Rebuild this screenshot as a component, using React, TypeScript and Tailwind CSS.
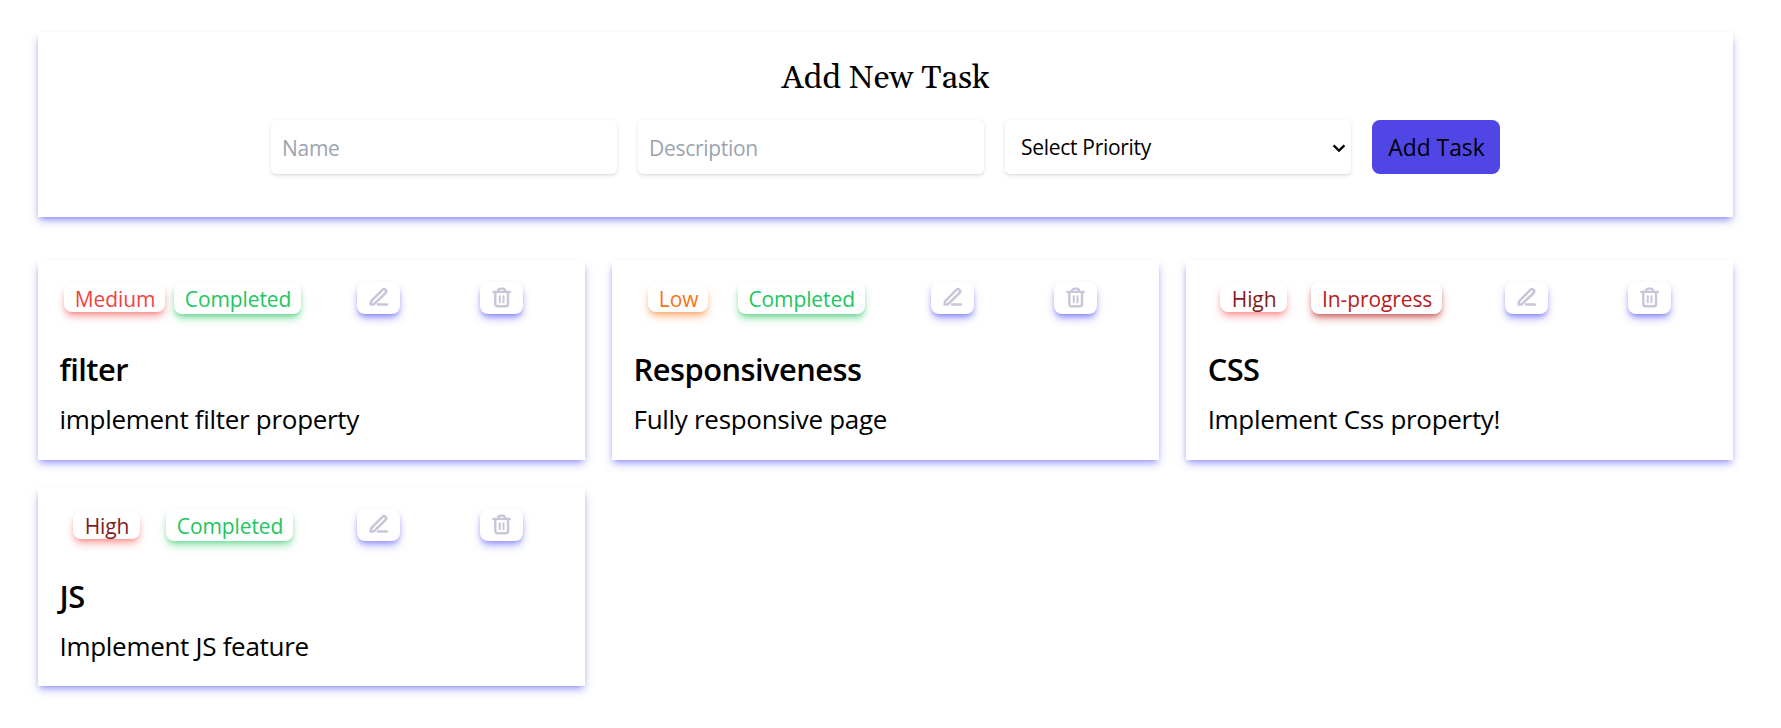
type Priority = "Low" | "Medium" | "High";
type Status = "Completed" | "In-progress";
type Task = { name: string; description: string; priority: Priority; status: Status; offset: string };

const tasks: Task[] = [
  { name: "filter", description: "implement filter property", priority: "Medium", status: "Completed", offset: "pl-[15px]" },
  { name: "Responsiveness", description: "Fully responsive page", priority: "Low", status: "Completed", offset: "pl-[4.6px]" },
  { name: "CSS", description: "Implement Css property!", priority: "High", status: "In-progress", offset: "pl-[6px]" },
  { name: "JS", description: "Implement JS feature", priority: "High", status: "Completed", offset: "pl-[7px]" },
];

const SHADOW =
  "shadow-[0_5.4px_8.2px_-1.4px_var(--glow),0_2.7px_5.4px_-2.7px_var(--glow)]";

const priorityStyle: Record<Priority, string> = {
  Low: "w-[60px] text-[#f97316] [--glow:rgba(249,115,22,0.5)]",
  Medium: "w-[101px] text-[#ef4444] [--glow:rgba(239,68,68,0.5)]",
  High: "w-[67px] text-[#7f1d1d] [--glow:rgba(248,80,80,0.5)]",
};

const statusStyle: Record<Status, string> = {
  Completed: "w-[127px] text-[#22c55e] [--glow:rgba(34,197,94,0.5)]",
  "In-progress": "w-[131px] text-[#b91c1c] [--glow:rgba(185,28,28,0.5)]",
};

const iconButton =
  "flex h-[32px] w-[43px] items-center justify-center rounded-lg bg-white text-[#c7c7d9] [--glow:rgba(80,80,250,0.5)] " + SHADOW;

function EditIcon() {
  return (
    <svg width="43" height="32" viewBox="0 0 43 32" fill="none" stroke="currentColor" strokeWidth="2.5" strokeLinecap="round" strokeLinejoin="round">
      <path d="M13.6 22.6l.3-2.4q.1-.9.8-1.6L25.4 7.900a2.15 2.15 0 0 1 3.1 3.1L17.6 21.600q-.7.7-1.6.8z" />
      <path d="M21 22.600h8.800" />
    </svg>
  );
}

function TrashIcon() {
  return (
    <svg width="43" height="32" viewBox="0 0 43 32" fill="none" stroke="currentColor" strokeWidth="2.4" strokeLinecap="round" strokeLinejoin="round">
      <path d="M13.400 9.900h16.400" />
      <path d="M15.300 10v12.300a2 2 0 0 0 2 2h8.700a2 2 0 0 0 2-2V10" />
      <path d="M18 9.600c.1-2 1-3 2.500-3h2.200c1.500 0 2.400 1 2.500 3" />
      <path d="M19.800 14.300v5.900M23.500 14.300v5.900" strokeWidth="2" />
    </svg>
  );
}

function TaskCard({ task }: { task: Task }) {
  return (
    <article className={"h-[199.600px] bg-white pt-[22px] [--glow:rgba(80,80,250,0.5)] " + SHADOW}>
      <div className="flex h-8">
        <div className={"flex w-[279px] items-start text-[21px] leading-[30px] tracking-[-0.1px] " + task.offset}>
          <div className="flex w-[123px] shrink-0 justify-center pt-0.5">
            <span className={"flex h-[28px] items-center justify-center rounded-lg bg-white pt-0.5 pl-px " + SHADOW + " " + priorityStyle[task.priority]}>
              {task.priority}
            </span>
          </div>
          <div className="flex w-[123px] shrink-0 justify-center">
            <span className={"flex h-[32px] shrink-0 items-center justify-center rounded-lg bg-white pt-0.5 pl-px " + SHADOW + " " + statusStyle[task.status]}>
              {task.status}
            </span>
          </div>
        </div>
        <div className="flex w-[123px] justify-center">
          <button aria-label="Edit" className={iconButton}><EditIcon /></button>
        </div>
        <div className="flex w-[123px] justify-center">
          <button aria-label="Delete" className={iconButton}><TrashIcon /></button>
        </div>
      </div>
      <h2 className="mt-[33px] px-[21.500px] text-[30.800px] leading-[44px] font-semibold tracking-[-0.500px]">{task.name}</h2>
      <p className="mt-[8px] px-[21.500px] text-[26px] leading-[40px] tracking-[-0.300px]">{task.description}</p>
    </article>
  );
}

const field =
  "h-[54px] w-[345.500px] rounded-[5.500px] bg-white text-[21px] outline-none shadow-[0_1.400px_4px_0_rgba(0,0,0,0.1),0_1.400px_2.700px_-1.400px_rgba(0,0,0,0.1)]";

export default function App() {
  return (
    <main className="min-h-screen bg-white pt-[32px] pr-[48px] pl-[38px] font-['Open_Sans',sans-serif] text-black">
      <section className={"h-[185px] bg-white pt-[25px] [--glow:rgba(80,80,250,0.5)] " + SHADOW}>
        <h1 className="text-center font-[Georgia,Gelasio,serif] text-[32.600px] leading-[44px]">Add New Task</h1>
        <form className="mt-[19px] flex justify-center gap-[21.500px]" onSubmit={(e) => e.preventDefault()}>
          <input className={field + " px-[11px] pt-px tracking-[-0.300px] placeholder:text-[#9ca3af]"} placeholder="Name" />
          <input className={field + " px-[11px] pt-px tracking-[-0.300px] placeholder:text-[#9ca3af]"} placeholder="Description" />
          <div className="relative">
            <select className={field + " appearance-none px-[16px] pt-[2px] tracking-[-0.300px]"} defaultValue="">
              <option value="">Select Priority</option>
              <option>Low</option>
              <option>Medium</option>
              <option>High</option>
            </select>
            <svg className="pointer-events-none absolute top-[24px] right-[5px]" width="14" height="9" viewBox="0 0 14 9" fill="none" stroke="black" strokeWidth="2.300">
              <path d="M1.600 1.400L7 6.600L12.400 1.400" />
            </svg>
          </div>
          <button className="h-[54px] w-[128px] rounded-lg bg-[#4f46e5] pt-[2px] pl-[1px] text-[22.800px]">Add Task</button>
        </form>
      </section>
      <section className="mt-[43px] grid grid-cols-3 gap-[27.200px]">
        {tasks.map((task) => (
          <TaskCard key={task.name} task={task} />
        ))}
      </section>
    </main>
  );
}
